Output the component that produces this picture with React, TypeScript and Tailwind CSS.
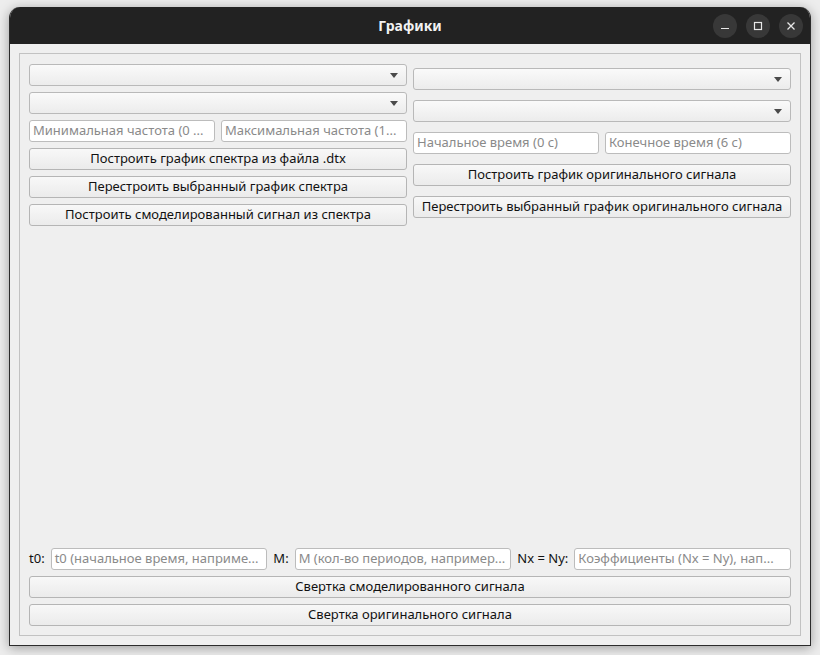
import React from "react"

const font = { fontFamily: '"Noto Sans", "Open Sans", sans-serif' }

function Combo() {
  return (
    <div className="h-[22px] w-full rounded-[3px] border border-[#b9b9b9] bg-gradient-to-b from-[#fafafa] to-[#ececec] flex items-center justify-end pr-[8px]">
      <svg width="8" height="5" viewBox="0 0 8 5">
        <path d="M0 0 L8 0 L4 5 Z" fill="#4a4a4a" />
      </svg>
    </div>
  )
}

function Field({ text }: { text: string }) {
  return (
    <div className="h-[22px] flex-1 min-w-0 rounded-[3px] border border-[#bcbcbc] bg-white flex items-center px-[3px] text-[13px] text-[#8a8a8a] whitespace-nowrap overflow-hidden">
      {text}
    </div>
  )
}

function Btn({ label }: { label: string }) {
  return (
    <button className="h-[22px] w-full rounded-[3px] border border-[#b5b5b5] bg-gradient-to-b from-[#f8f8f8] to-[#ebebeb] text-[13px] text-[#111111] flex items-center justify-center whitespace-nowrap">
      {label}
    </button>
  )
}

export default function App() {
  return (
    <div className="w-[820px] h-[655px] bg-[#ededed] overflow-hidden pt-[7px] pl-[9px]" style={font}>
      {/* Window */}
      <div className="w-[802px] h-[639px] rounded-t-[11px] bg-[#efefef] border-x border-b border-[#2b2b2b] shadow-[0_2px_12px_rgba(0,0,0,0.35)] flex flex-col overflow-hidden">
        {/* Title bar */}
        <div className="h-[37px] bg-[#222222] flex items-center relative shrink-0">
          <div className="flex-1 text-center text-[14px] font-bold text-[#f2f2f2]">Графики</div>
          <div className="absolute right-[7px] top-[7px] flex gap-[9px]">
            <div className="w-[24px] h-[24px] rounded-full bg-[#383838] flex items-center justify-center">
              <svg width="10" height="10" viewBox="0 0 10 10">
                <path d="M1 7.5 H9" stroke="#e8e8e8" strokeWidth="1.2" />
              </svg>
            </div>
            <div className="w-[24px] h-[24px] rounded-full bg-[#383838] flex items-center justify-center">
              <svg width="10" height="10" viewBox="0 0 10 10">
                <rect x="1.5" y="1.5" width="7" height="7" fill="none" stroke="#e8e8e8" strokeWidth="1.2" />
              </svg>
            </div>
            <div className="w-[24px] h-[24px] rounded-full bg-[#383838] flex items-center justify-center">
              <svg width="10" height="10" viewBox="0 0 10 10">
                <path d="M1.5 1.5 L8.5 8.5 M8.5 1.5 L1.5 8.5" stroke="#e8e8e8" strokeWidth="1.3" />
              </svg>
            </div>
          </div>
        </div>

        {/* Content */}
        <div className="flex-1 p-[9px]">
          <div className="h-[583px] border border-[#c2c2c2] px-[9px] pt-[10px] pb-[9px] flex flex-col">
            <div className="flex gap-[6px]">
              {/* Left column */}
              <div className="flex-1 flex flex-col gap-[6px]">
                <Combo />
                <Combo />
                <div className="flex gap-[6px]">
                  <Field text="Минимальная частота (0 ..." />
                  <Field text="Максимальная частота (1..." />
                </div>
                <Btn label="Построить график спектра из файла .dtx" />
                <Btn label="Перестроить выбранный график спектра" />
                <Btn label="Построить смоделированный сигнал из спектра" />
              </div>
              {/* Right column */}
              <div className="flex-1 flex flex-col gap-[10px] pt-[4px]">
                <Combo />
                <Combo />
                <div className="flex gap-[6px]">
                  <Field text="Начальное время (0 с)" />
                  <Field text="Конечное время (6 с)" />
                </div>
                <Btn label="Построить график оригинального сигнала" />
                <Btn label="Перестроить выбранный график оригинального сигнала" />
              </div>
            </div>

            <div className="flex-1" />

            <div className="flex flex-col gap-[6px]">
              <div className="flex items-center gap-[6px] text-[13px] text-[#111111]">
                <span>t0:</span>
                <Field text="t0 (начальное время, наприме..." />
                <span>M:</span>
                <Field text="M (кол-во периодов, например..." />
                <span>Nx = Ny:</span>
                <Field text="Коэффициенты (Nx = Ny), нап..." />
              </div>
              <Btn label="Свертка смоделированного сигнала" />
              <Btn label="Свертка оригинального сигнала" />
            </div>
          </div>
        </div>
      </div>
    </div>
  )
}
